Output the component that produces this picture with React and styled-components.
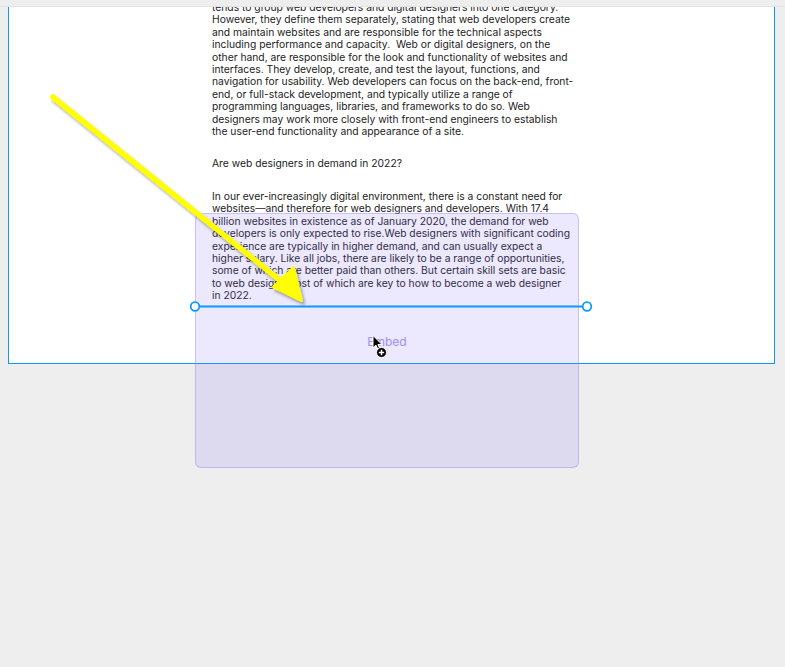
import React from "react";
import styled, { createGlobalStyle } from "styled-components";

const Global = createGlobalStyle`
  html, body { margin: 0; padding: 0; background: #eeeeee; }
  body { font-family: Inter, "Noto Sans", sans-serif; overflow: hidden; }
`;

const Canvas = styled.div`
  position: relative;
  width: 785px;
  height: 667px;
  background: #eeeeee;
  overflow: hidden;
`;

const TopBar = styled.div`
  position: relative;
  z-index: 3;
  height: 7px;
  background: #eeeeee;
  border-bottom: 1px solid #e4e4e4;
  box-sizing: border-box;
`;

const Frame = styled.div`
  margin-left: 8px;
  width: 767px;
  height: 357px;
  box-sizing: border-box;
  background: #ffffff;
  border: 1px solid #0d99ff;
  border-top: none;
  overflow: hidden;
`;

const Column = styled.div`
  margin-left: 203px;
  margin-top: -6px;
  width: 370px;
  color: #222222;
  font-size: 10.3px;
  line-height: 12.4px;
`;

const Para = styled.p`
  margin: 0 0 ${(p) => p.$gap || 20}px 0;
`;

const Line = styled.span`
  display: block;
  white-space: pre;
`;

const EmbedBox = styled.div`
  position: absolute;
  left: 195px;
  top: 213px;
  width: 384px;
  height: 255px;
  box-sizing: border-box;
  border: 1px solid rgba(140, 115, 240, 0.35);
  border-radius: 6px;
  background: rgba(138, 110, 240, 0.16);
  display: flex;
  align-items: center;
  justify-content: center;
  z-index: 2;
`;

const EmbedLabel = styled.span`
  font-family: Inter, sans-serif;
  font-size: 12px;
  color: #a48ef2;
  margin-top: 1px;
`;

const Overlay = styled.svg`
  position: absolute;
  left: 0;
  top: 0;
  width: 785px;
  height: 667px;
  pointer-events: none;
  z-index: ${(p) => p.$z || 4};
`;

const para1 = [
  "tends to group web developers and digital designers into one category.",
  "However, they define them separately, stating that web developers create",
  "and maintain websites and are responsible for the technical aspects",
  "including performance and capacity.  Web or digital designers, on the",
  "other hand, are responsible for the look and functionality of websites and",
  "interfaces. They develop, create, and test the layout, functions, and",
  "navigation for usability. Web developers can focus on the back-end, front-",
  "end, or full-stack development, and typically utilize a range of",
  "programming languages, libraries, and frameworks to do so. Web",
  "designers may work more closely with front-end engineers to establish",
  "the user-end functionality and appearance of a site.",
];

const para3 = [
  "In our ever-increasingly digital environment, there is a constant need for",
  "websites\u2014and therefore for web designers and developers. With 17.4",
  "billion websites in existence as of January 2020, the demand for web",
  "developers is only expected to rise.Web designers with significant coding",
  "experience are typically in higher demand, and can usually expect a",
  "higher salary. Like all jobs, there are likely to be a range of opportunities,",
  "some of which are better paid than others. But certain skill sets are basic",
  "to web design, most of which are key to how to become a web designer",
  "in 2022.",
];

export default function App() {
  return (
    <Canvas>
      <Global />
      <TopBar />
      <Frame>
        <Column>
          <Para>
            {para1.map((l, i) => (
              <Line key={i}>{l}</Line>
            ))}
          </Para>
          <Para>
            <Line>Are web designers in demand in 2022?</Line>
          </Para>
          <Para>
            {para3.map((l, i) => (
              <Line key={i}>{l}</Line>
            ))}
          </Para>
        </Column>
      </Frame>

      <EmbedBox>
        <EmbedLabel>Embed</EmbedLabel>
      </EmbedBox>

      {/* drop indicator line */}
      <Overlay $z={3}>
        <line x1="195" y1="306.5" x2="587" y2="306.5" stroke="#0d99ff" strokeWidth="2" />
        <circle cx="195" cy="306.5" r="4.3" fill="#ffffff" stroke="#0d99ff" strokeWidth="1.8" />
        <circle cx="587" cy="306.5" r="4.3" fill="#ffffff" stroke="#0d99ff" strokeWidth="1.8" />
      </Overlay>

      {/* annotation arrow */}
      <Overlay $z={4}>
        <defs>
          <filter id="sh" x="-20%" y="-20%" width="140%" height="140%">
            <feDropShadow dx="2" dy="3" stdDeviation="1.6" floodColor="#000" floodOpacity="0.35" />
          </filter>
        </defs>
        <g filter="url(#sh)">
          <line x1="53" y1="97" x2="286" y2="285" stroke="#ffff00" strokeWidth="5.5" strokeLinecap="round" />
          <polygon points="302,301 273,287 294,267" fill="#ffff00" stroke="#ffff00" strokeWidth="2" strokeLinejoin="round" />
        </g>
      </Overlay>

      {/* mouse cursor with plus badge */}
      <Overlay $z={5}>
        <path
          d="M373 335.5 L373 348 L376 345.2 L378.2 350 L380 349.2 L377.9 344.5 L382 344.5 Z"
          fill="#000"
          stroke="#fff"
          strokeWidth="1"
          strokeLinejoin="round"
        />
        <circle cx="381.5" cy="352.5" r="5" fill="#000" stroke="#fff" strokeWidth="1" />
        <path d="M381.5 349.8 V355.2 M378.8 352.5 H384.2" stroke="#fff" strokeWidth="1.5" />
      </Overlay>
    </Canvas>
  );
}
